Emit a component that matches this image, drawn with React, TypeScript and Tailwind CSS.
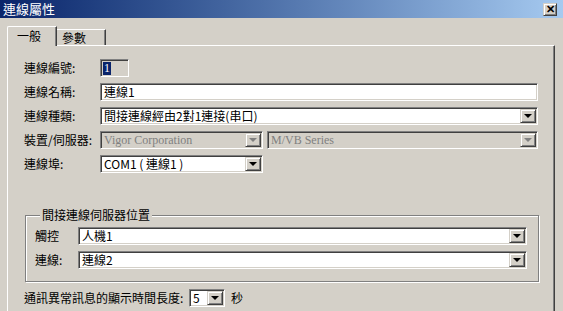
import React from "react";

const sunken =
  "border border-t-[#808080] border-l-[#808080] border-b-white border-r-white shadow-[inset_1px_1px_0_#404040,inset_-1px_-1px_0_#d4d0c8]";
const raised =
  "border border-t-[#d4d0c8] border-l-[#d4d0c8] border-r-[#404040] border-b-[#404040] shadow-[inset_1px_1px_0_#ffffff,inset_-1px_-1px_0_#808080]";

interface ComboProps {
  value: string;
  width: string;
  disabled?: boolean;
}

const Arrow = ({ disabled = false }: { disabled?: boolean }) => (
  <div
    className={
      disabled
        ? "w-0 h-0 border-l-[4px] border-r-[4px] border-t-[4px] border-l-transparent border-r-transparent border-t-[#808080]"
        : "w-0 h-0 border-l-[4px] border-r-[4px] border-t-[4px] border-l-transparent border-r-transparent border-t-black"
    }
  />
);

const Combo = ({ value, width, disabled = false }: ComboProps) => (
  <div className={`${width} h-[18px] flex items-stretch p-px ${sunken} ${disabled ? "bg-[#d4d0c8]" : "bg-white"}`}>
    <div
      className={`flex-1 min-w-0 flex items-center pl-[2px] text-[12px] leading-[14px] whitespace-nowrap ${
        disabled ? "text-[#808080]" : "text-black"
      }`}
    >
      {value}
    </div>
    <div className={`w-[16px] flex items-center justify-center bg-[#d4d0c8] ${raised}`}>
      <Arrow disabled={disabled} />
    </div>
  </div>
);

const Row = ({ label, children }: { label: string; children: React.ReactNode }) => (
  <div className="flex items-center h-[18px]">
    <div className="w-[76px] text-[12px] leading-[14px] whitespace-nowrap">{label}</div>
    {children}
  </div>
);

export default function App() {
  return (
    <div className="w-[563px] h-[311px] overflow-hidden bg-[#d4d0c8] font-['Liberation_Serif','Noto_Sans_CJK_TC',serif] text-black">
      {/* title bar */}
      <div className="h-[18px] flex items-center justify-between bg-gradient-to-r from-[#0a246a] to-[#a6caf0] pl-[3px] pr-[6px]">
        <span className="text-white text-[13px] font-['Noto_Sans_CJK_TC',sans-serif] leading-[16px]">
          連線屬性
        </span>
        <div className={`w-[14px] h-[13px] bg-[#d4d0c8] flex items-center justify-center text-[11px] leading-none font-bold font-['Liberation_Sans',sans-serif] ${raised}`}>
          ✕
        </div>
      </div>

      {/* tabs */}
      <div className="flex items-end ml-[7px] mt-[8px] h-[19px] relative z-10">
        <div className="h-[20px] w-[50px] -mb-[1px] bg-[#d4d0c8] border-l border-t border-white border-r border-r-[#404040] rounded-tl-[2px] shadow-[inset_-1px_0_0_#808080] pl-[9px] pt-[1px] text-[12px] leading-[16px] font-['Noto_Sans_CJK_TC',sans-serif]">
          一般
        </div>
        <div className="h-[16px] w-[49px] border-t border-r border-t-white border-r-[#404040] shadow-[inset_-1px_0_0_#808080] pl-[5px] text-[12px] leading-[15px] font-['Noto_Sans_CJK_TC',sans-serif]">
          參數
        </div>
      </div>

      {/* panel */}
      <div className="ml-[7px] w-[548px] h-[280px] border-l border-t border-l-white border-t-white border-r border-r-[#404040] shadow-[inset_-1px_0_0_#808080] pl-[16px] pt-[13px] flex flex-col">
        <div className="flex flex-col gap-[6px] font-['Noto_Sans_CJK_TC',sans-serif]">
          <Row label="連線編號:">
            <div className={`w-[29px] h-[18px] flex items-start p-[2px] bg-[#d4d0c8] ${sunken}`}>
              <div className="bg-[#0a246a] text-white text-[12px] leading-[13px] px-px font-['Liberation_Serif',serif]">1</div>
            </div>
          </Row>
          <Row label="連線名稱:">
            <div className={`w-[438px] h-[18px] flex items-center bg-white pl-[3px] text-[12px] leading-[14px] whitespace-nowrap ${sunken}`}>
              連線1
            </div>
          </Row>
          <Row label="連線種類:">
            <Combo width="w-[438px]" value="間接連線經由2對1連接(串口)" />
          </Row>
          <Row label="裝置/伺服器:">
            <div className="flex gap-[4px] font-['Liberation_Serif',serif]">
              <Combo width="w-[163px]" value="Vigor Corporation" disabled />
              <Combo width="w-[271px]" value="M/VB Series" disabled />
            </div>
          </Row>
          <Row label="連線埠:">
            <Combo width="w-[163px]" value="COM1 ( 連線1 )" />
          </Row>
        </div>

        {/* group box */}
        <fieldset className="ml-px mt-[35px] w-[514px] border border-[#808080] shadow-[inset_1px_1px_0_#ffffff,1px_1px_0_#ffffff] pl-[9px] pr-[11px] pb-[12px] pt-[5px] flex flex-col gap-[6px] font-['Noto_Sans_CJK_TC',sans-serif]">
          <legend className="ml-[5px] px-[2px] bg-[#d4d0c8] text-[12px] leading-[14px]">間接連線伺服器位置</legend>
          <div className="flex items-center h-[18px]">
            <div className="w-[43px] text-[12px] leading-[14px]">觸控</div>
            <Combo width="w-[449px]" value="人機1" />
          </div>
          <div className="flex items-center h-[18px]">
            <div className="w-[43px] text-[12px] leading-[14px]">連線:</div>
            <Combo width="w-[449px]" value="連線2" />
          </div>
        </fieldset>

        <div className="flex items-center h-[18px] mt-[7px] font-['Noto_Sans_CJK_TC',sans-serif]">
          <div className="text-[12px] leading-[14px] whitespace-nowrap w-[165px]">通訊異常訊息的顯示時間長度:</div>
          <Combo width="w-[36px]" value="5" />
          <div className="text-[12px] leading-[14px] ml-[6px]">秒</div>
        </div>
      </div>
    </div>
  );
}
